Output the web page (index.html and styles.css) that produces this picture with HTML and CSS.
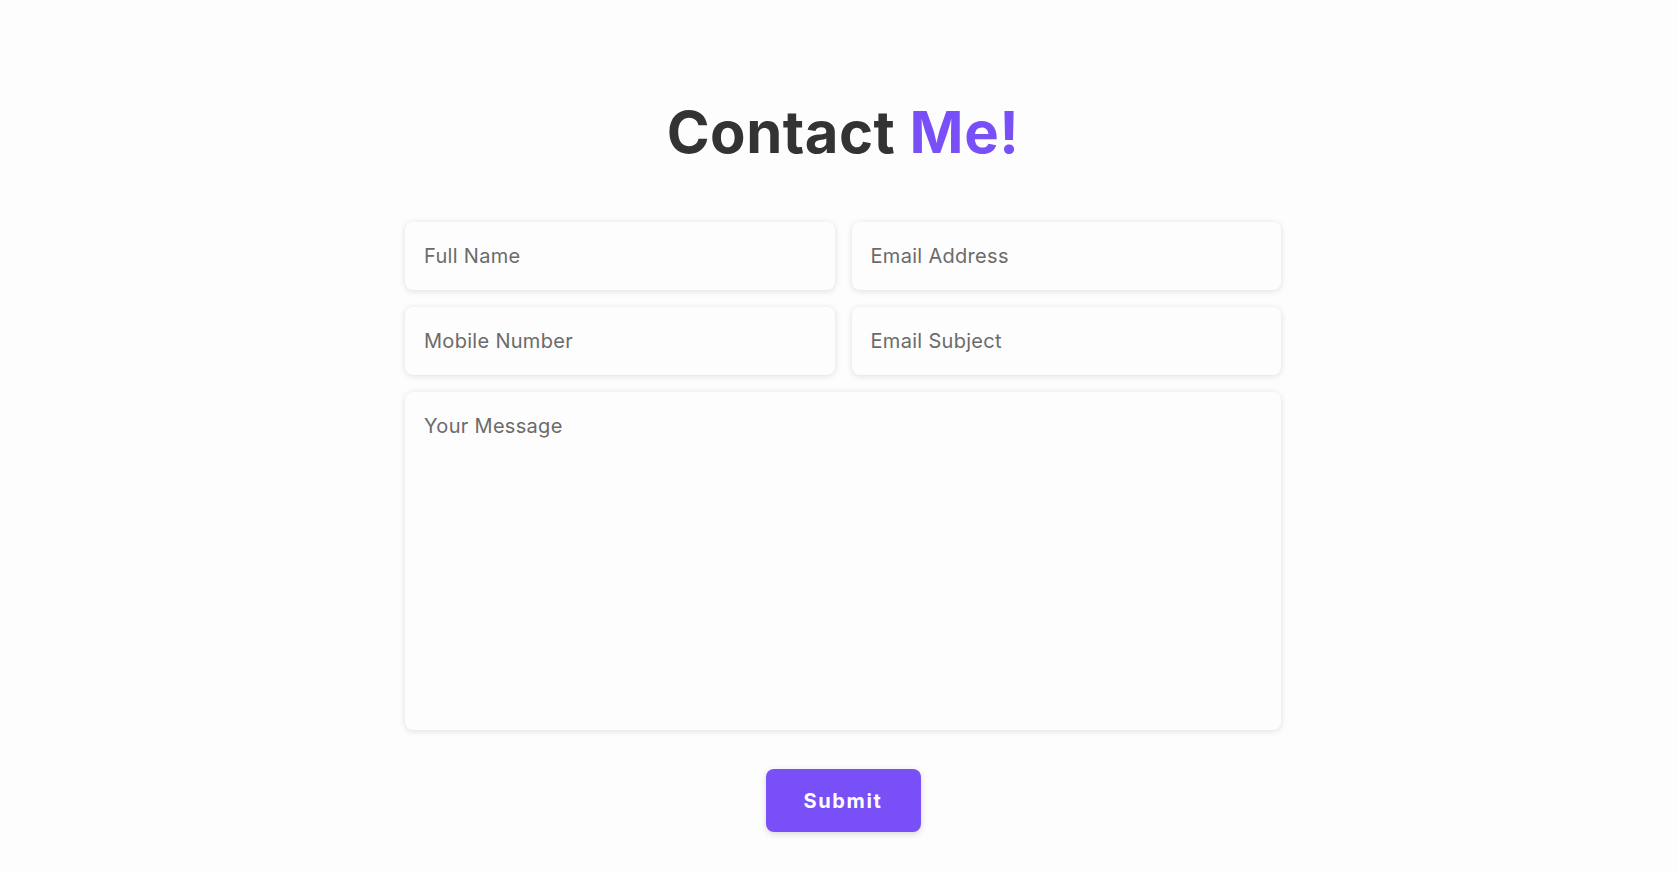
FILE: index.html
```html
<!DOCTYPE html>
<html lang="en">
    <head>
        <meta charset="UTF-8">
        <title>Contact Me!</title>
        <link rel="stylesheet" href="styles.css">
    </head>
    <body>
        <section class="contact">
            <h2 class="heading">Contact <span>Me!</span></h2>

            <form class="contact-form" action="#">
                <div class="input-box">
                    <input type="text" placeholder="Full Name">
                    <input type="email" placeholder="Email Address">
                </div>
                <div class="input-box">
                    <input type="tel" placeholder="Mobile Number">
                    <input type="text" placeholder="Email Subject">
                </div>
                <textarea placeholder="Your Message"></textarea>
                <button type="submit" class="btn">Submit</button>
            </form>
        </section>
    </body>
</html>
```

FILE: styles.css
```css
:root {
    --bg-color: #fdfdfd;
    --text-color: #333;
    --main-color: #7950f8;
}

* {
    box-sizing: border-box;
}

body {
    margin: 0;
    background-color: var(--bg-color);
    color: var(--text-color);
    font-family: Inter, "Noto Sans", sans-serif;
}

/* Section */

.contact {
    display: flex;
    flex-direction: column;
    align-items: center;
    padding: 98px 0 40px 8px;
}

.heading {
    margin: 0 0 56px;
    font-size: 58px;
    line-height: 68px;
    font-weight: 700;
    letter-spacing: 0.5px;
}

.heading span {
    color: var(--main-color);
}

/* Form */

.contact-form {
    width: 876px;
    display: flex;
    flex-direction: column;
    align-items: center;
    gap: 17px;
}

.input-box {
    width: 100%;
    display: grid;
    grid-template-columns: 1fr 1fr;
    gap: 17px;
}

.contact-form input,
.contact-form textarea {
    width: 100%;
    font-family: inherit;
    font-size: 20px;
    letter-spacing: 0.3px;
    color: var(--text-color);
    background-color: var(--bg-color);
    border: none;
    border-radius: 8px;
    box-shadow: 0 1px 6px rgba(0, 0, 0, 0.13);
    outline: none;
}

.contact-form input {
    height: 68px;
    padding: 0 19px;
}

.contact-form textarea {
    height: 338px;
    padding: 19px;
    line-height: 1.5;
    resize: none;
}

.contact-form ::placeholder {
    color: #6b6b6b;
}

.btn {
    margin-top: 22px;
    width: 155px;
    height: 63px;
    border: none;
    border-radius: 8px;
    background-color: var(--main-color);
    color: #fff;
    font-family: inherit;
    font-size: 20px;
    font-weight: 700;
    letter-spacing: 1.6px;
    box-shadow: 0 2px 6px rgba(0, 0, 0, 0.15);
    cursor: pointer;
}
```
